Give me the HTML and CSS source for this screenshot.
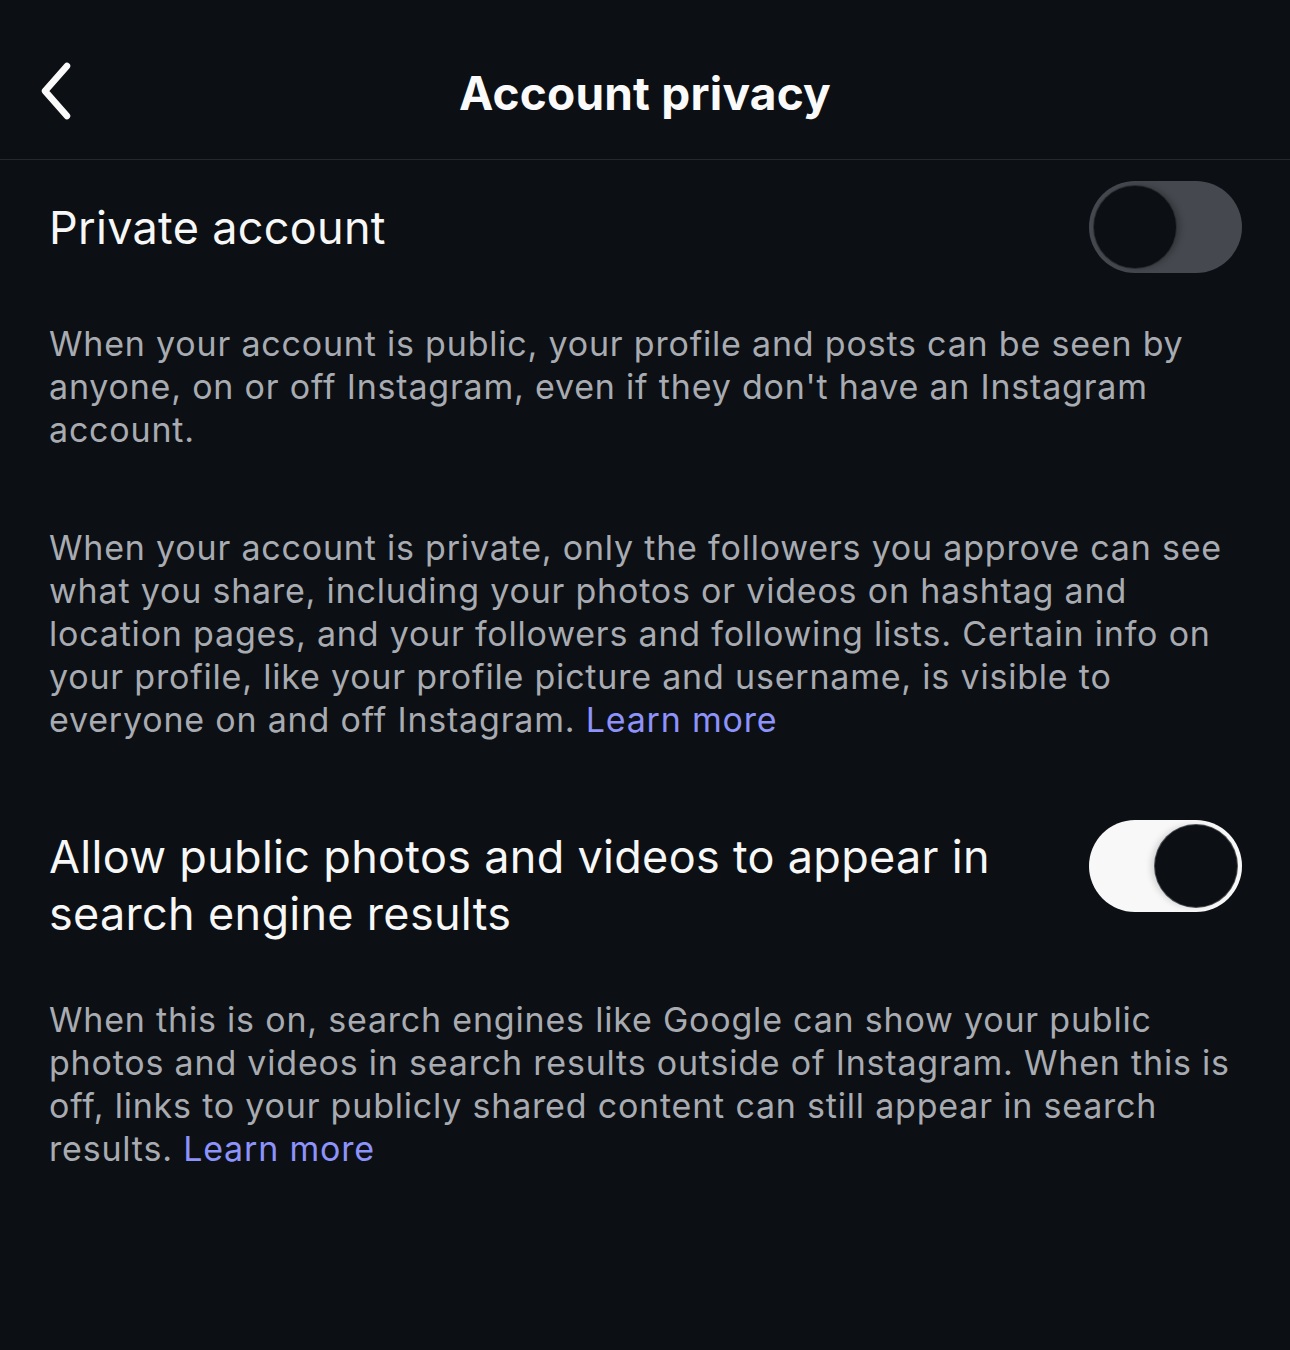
FILE: index.html
```html
<!DOCTYPE html>
<html lang="en">
<head>
<meta charset="utf-8">
<title>Account privacy</title>
<link rel="stylesheet" href="styles.css">
</head>
<body>
<div class="screen">
  <header class="topbar">
    <button class="back" aria-label="Back">
      <svg viewBox="0 0 40 64" width="40" height="64"><path d="M30 5 L8 30 L30 55" fill="none" stroke="#fafafa" stroke-width="6.5" stroke-linecap="round" stroke-linejoin="round"/></svg>
    </button>
    <h1 class="title">Account privacy</h1>
  </header>

  <main class="content">
    <section class="setting">
      <div class="setting-row">
        <div class="setting-label">Private account</div>
        <div class="switch switch-off"><span class="knob"></span></div>
      </div>
      <p class="desc">When your account is public, your profile and posts can be seen by anyone, on or off Instagram, even if they don't have an Instagram account.</p>
      <p class="desc">When your account is private, only the followers you approve can see what you share, including your photos or videos on hashtag and location pages, and your followers and following lists. Certain info on your profile, like your profile picture and username, is visible to everyone on and off Instagram. <a class="link" href="#">Learn more</a></p>
    </section>

    <section class="setting setting-second">
      <div class="setting-row">
        <div class="setting-label">Allow public photos and videos to appear in search engine results</div>
        <div class="switch switch-on"><span class="knob"></span></div>
      </div>
      <p class="desc">When this is on, search engines like Google can show your public photos and videos in search results outside of Instagram. When this is off, links to your publicly shared content can still appear in search results. <a class="link" href="#">Learn more</a></p>
    </section>
  </main>
</div>
</body>
</html>
```

FILE: styles.css
```css
* { box-sizing: border-box; }

html, body {
  margin: 0;
  padding: 0;
  background: #0c1014;
}

body {
  font-family: Inter, "Noto Sans", "Liberation Sans", sans-serif;
  color: #f5f5f5;
  width: 1290px;
  height: 1350px;
  overflow: hidden;
}

.screen {
  display: flex;
  flex-direction: column;
}

.topbar {
  position: relative;
  height: 160px;
  border-bottom: 1px solid #25282d;
  display: flex;
  align-items: center;
  justify-content: center;
}

.back {
  position: absolute;
  left: 37px;
  top: 61px;
  background: none;
  border: 0;
  padding: 0;
  width: 40px;
  height: 64px;
  cursor: pointer;
}

.back svg { display: block; }

.title {
  margin: 0;
  font-size: 46px;
  font-weight: 700;
  letter-spacing: 0.2px;
  color: #fafafa;
  padding-top: 26px;
}

.content {
  padding: 0 48px 0 49px;
}

.setting-row {
  display: flex;
  align-items: center;
  justify-content: space-between;
  gap: 40px;
}

.setting:first-child .setting-row {
  padding-top: 21px;
  min-height: 113px;
}

.setting-label {
  font-size: 45px;
  line-height: 57px;
  color: #f7f7f7;
  font-weight: 400;
  letter-spacing: 0.3px;
}

.setting-second .setting-row {
  align-items: flex-start;
}

.setting-second .setting-label {
  max-width: 990px;
}

.setting-second .switch {
  margin-top: -8px;
}

.setting-second {
  padding-top: 87px;
}

.desc {
  margin: 0;
  font-size: 34px;
  line-height: 43px;
  color: #a8abb1;
  letter-spacing: 0.8px;
}

.setting:first-child .desc:first-of-type {
  margin-top: 49px;
}

.setting:first-child .desc + .desc {
  margin-top: 75px;
}

.setting-second .desc {
  margin-top: 56px;
}

.link {
  color: #8d93fb;
  text-decoration: none;
}

.switch {
  position: relative;
  flex: none;
  width: 153px;
  height: 92px;
  border-radius: 46px;
}

.switch .knob {
  position: absolute;
  top: 5px;
  width: 82px;
  height: 82px;
  border-radius: 50%;
  background: #0c1014;
}

.switch-off {
  background: #45484e;
}

.switch-off .knob {
  left: 5px;
  box-shadow: 0 0 0 1px #2a2d32, 4px 0 6px rgba(0,0,0,0.25);
}

.switch-on {
  background: #f8f8f8;
}

.switch-on .knob {
  right: 5px;
  box-shadow: 0 0 0 1px #4a4d52, -4px 0 6px rgba(0,0,0,0.15);
}
```
